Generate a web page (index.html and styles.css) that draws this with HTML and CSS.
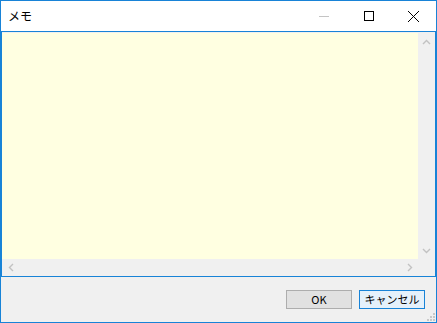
FILE: index.html
```html
<!DOCTYPE html>
<html lang="ja">
<head>
    <meta charset="UTF-8">
    <title>メモ</title>
    <link rel="stylesheet" href="styles.css">
</head>
<body>
    <div class="window">
        <div class="titlebar">
            <span class="title">メモ</span>
            <div class="caption-buttons">
                <div class="cap-btn">
                    <svg width="10" height="10" viewBox="0 0 10 10"><path d="M0 5.5h10" stroke="#c4c4c4" stroke-width="1"/></svg>
                </div>
                <div class="cap-btn">
                    <svg width="10" height="10" viewBox="0 0 10 10"><rect x="0.5" y="0.5" width="9" height="9" fill="none" stroke="#000" stroke-width="1"/></svg>
                </div>
                <div class="cap-btn">
                    <svg width="11" height="11" viewBox="0 0 11 11"><path d="M0 0L11 11M11 0L0 11" stroke="#000" stroke-width="1"/></svg>
                </div>
            </div>
        </div>
        <div class="memo-box">
            <div class="memo-row">
                <div class="memo-text"></div>
                <div class="vscroll">
                    <div class="arrow">
                        <svg width="9" height="6" viewBox="0 0 9 6"><path d="M1 5L4.5 1.5L8 5" fill="none" stroke="#c2c2c2" stroke-width="1.4"/></svg>
                    </div>
                    <div class="arrow">
                        <svg width="9" height="6" viewBox="0 0 9 6"><path d="M1 1L4.5 4.5L8 1" fill="none" stroke="#c2c2c2" stroke-width="1.4"/></svg>
                    </div>
                </div>
            </div>
            <div class="hscroll">
                <div class="harrows">
                    <div class="arrow">
                        <svg width="6" height="9" viewBox="0 0 6 9"><path d="M5 1L1.5 4.5L5 8" fill="none" stroke="#c2c2c2" stroke-width="1.4"/></svg>
                    </div>
                    <div class="arrow">
                        <svg width="6" height="9" viewBox="0 0 6 9"><path d="M1 1L4.5 4.5L1 8" fill="none" stroke="#c2c2c2" stroke-width="1.4"/></svg>
                    </div>
                </div>
                <div class="corner"></div>
            </div>
        </div>
        <div class="footer">
            <button class="btn">OK</button>
            <button class="btn btn-default">キャンセル</button>
            <svg class="grip" width="8" height="8" viewBox="0 0 8 8">
                <rect x="6" y="0" width="2" height="2" fill="#c8c8c8"/>
                <rect x="3" y="3" width="2" height="2" fill="#c8c8c8"/>
                <rect x="6" y="3" width="2" height="2" fill="#c8c8c8"/>
                <rect x="0" y="6" width="2" height="2" fill="#c8c8c8"/>
                <rect x="3" y="6" width="2" height="2" fill="#c8c8c8"/>
                <rect x="6" y="6" width="2" height="2" fill="#c8c8c8"/>
            </svg>
        </div>
    </div>
</body>
</html>
```

FILE: styles.css
```css
:root {
    --accent: #1883d7;
    --face: #f0f0f0;
    --memo-bg: #ffffe1;
}
body {
    margin: 0;
    font-family: 'Noto Sans CJK JP', 'Noto Sans', sans-serif;
    font-size: 12px;
    color: #000;
}
.window {
    width: 437px;
    height: 323px;
    box-sizing: border-box;
    border: 1px solid var(--accent);
    display: flex;
    flex-direction: column;
    background: var(--face);
}
.titlebar {
    height: 30px;
    background: #fff;
    display: flex;
    align-items: center;
    justify-content: space-between;
    flex-shrink: 0;
}
.title {
    padding-left: 7px;
    font-size: 12px;
    line-height: 30px;
}
.caption-buttons {
    display: flex;
    height: 30px;
}
.cap-btn {
    width: 45px;
    height: 30px;
    display: flex;
    align-items: center;
    justify-content: center;
}
.memo-box {
    height: 246px;
    box-sizing: border-box;
    border: 1px solid var(--accent);
    display: flex;
    flex-direction: column;
    flex-shrink: 0;
}
.memo-row {
    flex: 1;
    display: flex;
    padding-top: 1px;
}
.memo-text {
    flex: 1;
    background: var(--memo-bg);
}
.vscroll {
    width: 17px;
    background: var(--face);
    display: flex;
    flex-direction: column;
    justify-content: space-between;
}
.vscroll .arrow {
    height: 17px;
    display: flex;
    align-items: center;
    justify-content: center;
}
.hscroll {
    height: 17px;
    display: flex;
    background: var(--face);
}
.harrows {
    flex: 1;
    display: flex;
    justify-content: space-between;
}
.harrows .arrow {
    width: 17px;
    display: flex;
    align-items: center;
    justify-content: center;
}
.corner {
    width: 17px;
    background: var(--face);
}
.footer {
    flex: 1;
    display: flex;
    align-items: center;
    justify-content: flex-end;
    gap: 7px;
    padding-right: 11px;
    position: relative;
}
.btn {
    width: 66px;
    height: 19px;
    box-sizing: border-box;
    border: 1px solid #adadad;
    background: #e1e1e1;
    font-family: 'Noto Sans CJK JP', 'Noto Sans', sans-serif;
    font-size: 11px;
    line-height: 15px;
    padding: 0;
    color: #000;
    margin-top: 0;
}
.btn-default {
    border-color: var(--accent);
    background: #e5f1fb;
}
.grip {
    position: absolute;
    right: 1px;
    bottom: 1px;
}
```
